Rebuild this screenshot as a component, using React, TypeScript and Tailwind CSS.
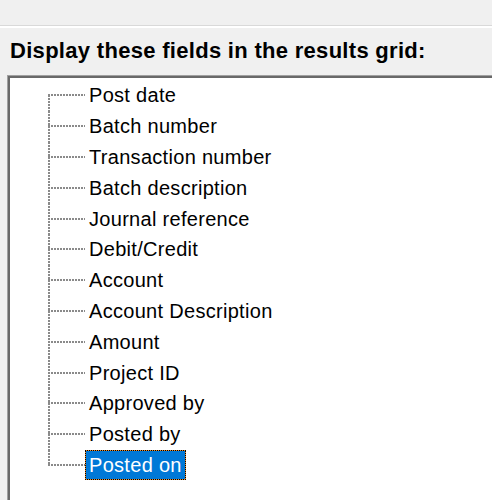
import React from "react";

const items = [
  "Post date",
  "Batch number",
  "Transaction number",
  "Batch description",
  "Journal reference",
  "Debit/Credit",
  "Account",
  "Account Description",
  "Amount",
  "Project ID",
  "Approved by",
  "Posted by",
  "Posted on",
];

const hDots =
  "bg-[linear-gradient(to_right,#8a8a8a_0_2px,transparent_2px_3px)] bg-[length:3px_2px]";
const vDots =
  "bg-[linear-gradient(to_bottom,#8a8a8a_0_2px,transparent_2px_3px)] bg-[length:2px_3px]";

export default function App() {
  return (
    <div
      className="w-[492px] h-[500px] overflow-hidden bg-[#f0f0f0] flex flex-col"
      style={{ fontFamily: '"Liberation Sans", Arial, sans-serif' }}
    >
      <div className="h-[25px] shrink-0" />
      <div className="h-[1px] bg-[#d9d9d9] shrink-0" />
      <div className="h-[2px] bg-white shrink-0" />
      <div className="pl-[10px] pt-[11px] h-[47px] shrink-0 text-[22px] font-bold leading-[24px] text-black tracking-[0.3px]">
        Display these fields in the results grid:
      </div>
      <div className="ml-[7px] flex-1 border-t border-l border-[#a0a0a0] bg-white">
        <div className="h-full border-t-2 border-l-2 border-[#696969] pt-[2px] pl-[38px]">
          {items.map((label, i) => {
            const first = i === 0;
            const last = i === items.length - 1;
            return (
              <div key={label} className="flex items-center h-[30.8px]">
                <div className="relative self-stretch w-[37px] shrink-0">
                  <div
                    className={`absolute left-0 w-[2px] ${vDots} ${first ? "top-1/2" : "top-0"} ${last ? "bottom-1/2" : "bottom-0"}`}
                  />
                  <div className={`absolute left-0 right-0 top-1/2 h-[2px] -translate-y-[1px] ${hDots}`} />
                </div>
                {last ? (
                  <span className="inline-block bg-[#f08a24] border border-dotted border-black">
                    <span className="block bg-[#0078d7] text-white px-[3px] text-[20px] leading-[28px] tracking-[0.3px]">
                      {label}
                    </span>
                  </span>
                ) : (
                  <span className="inline-block border border-transparent px-[3px] text-[20px] leading-[28px] tracking-[0.3px] text-black">
                    {label}
                  </span>
                )}
              </div>
            );
          })}
        </div>
      </div>
    </div>
  );
}
